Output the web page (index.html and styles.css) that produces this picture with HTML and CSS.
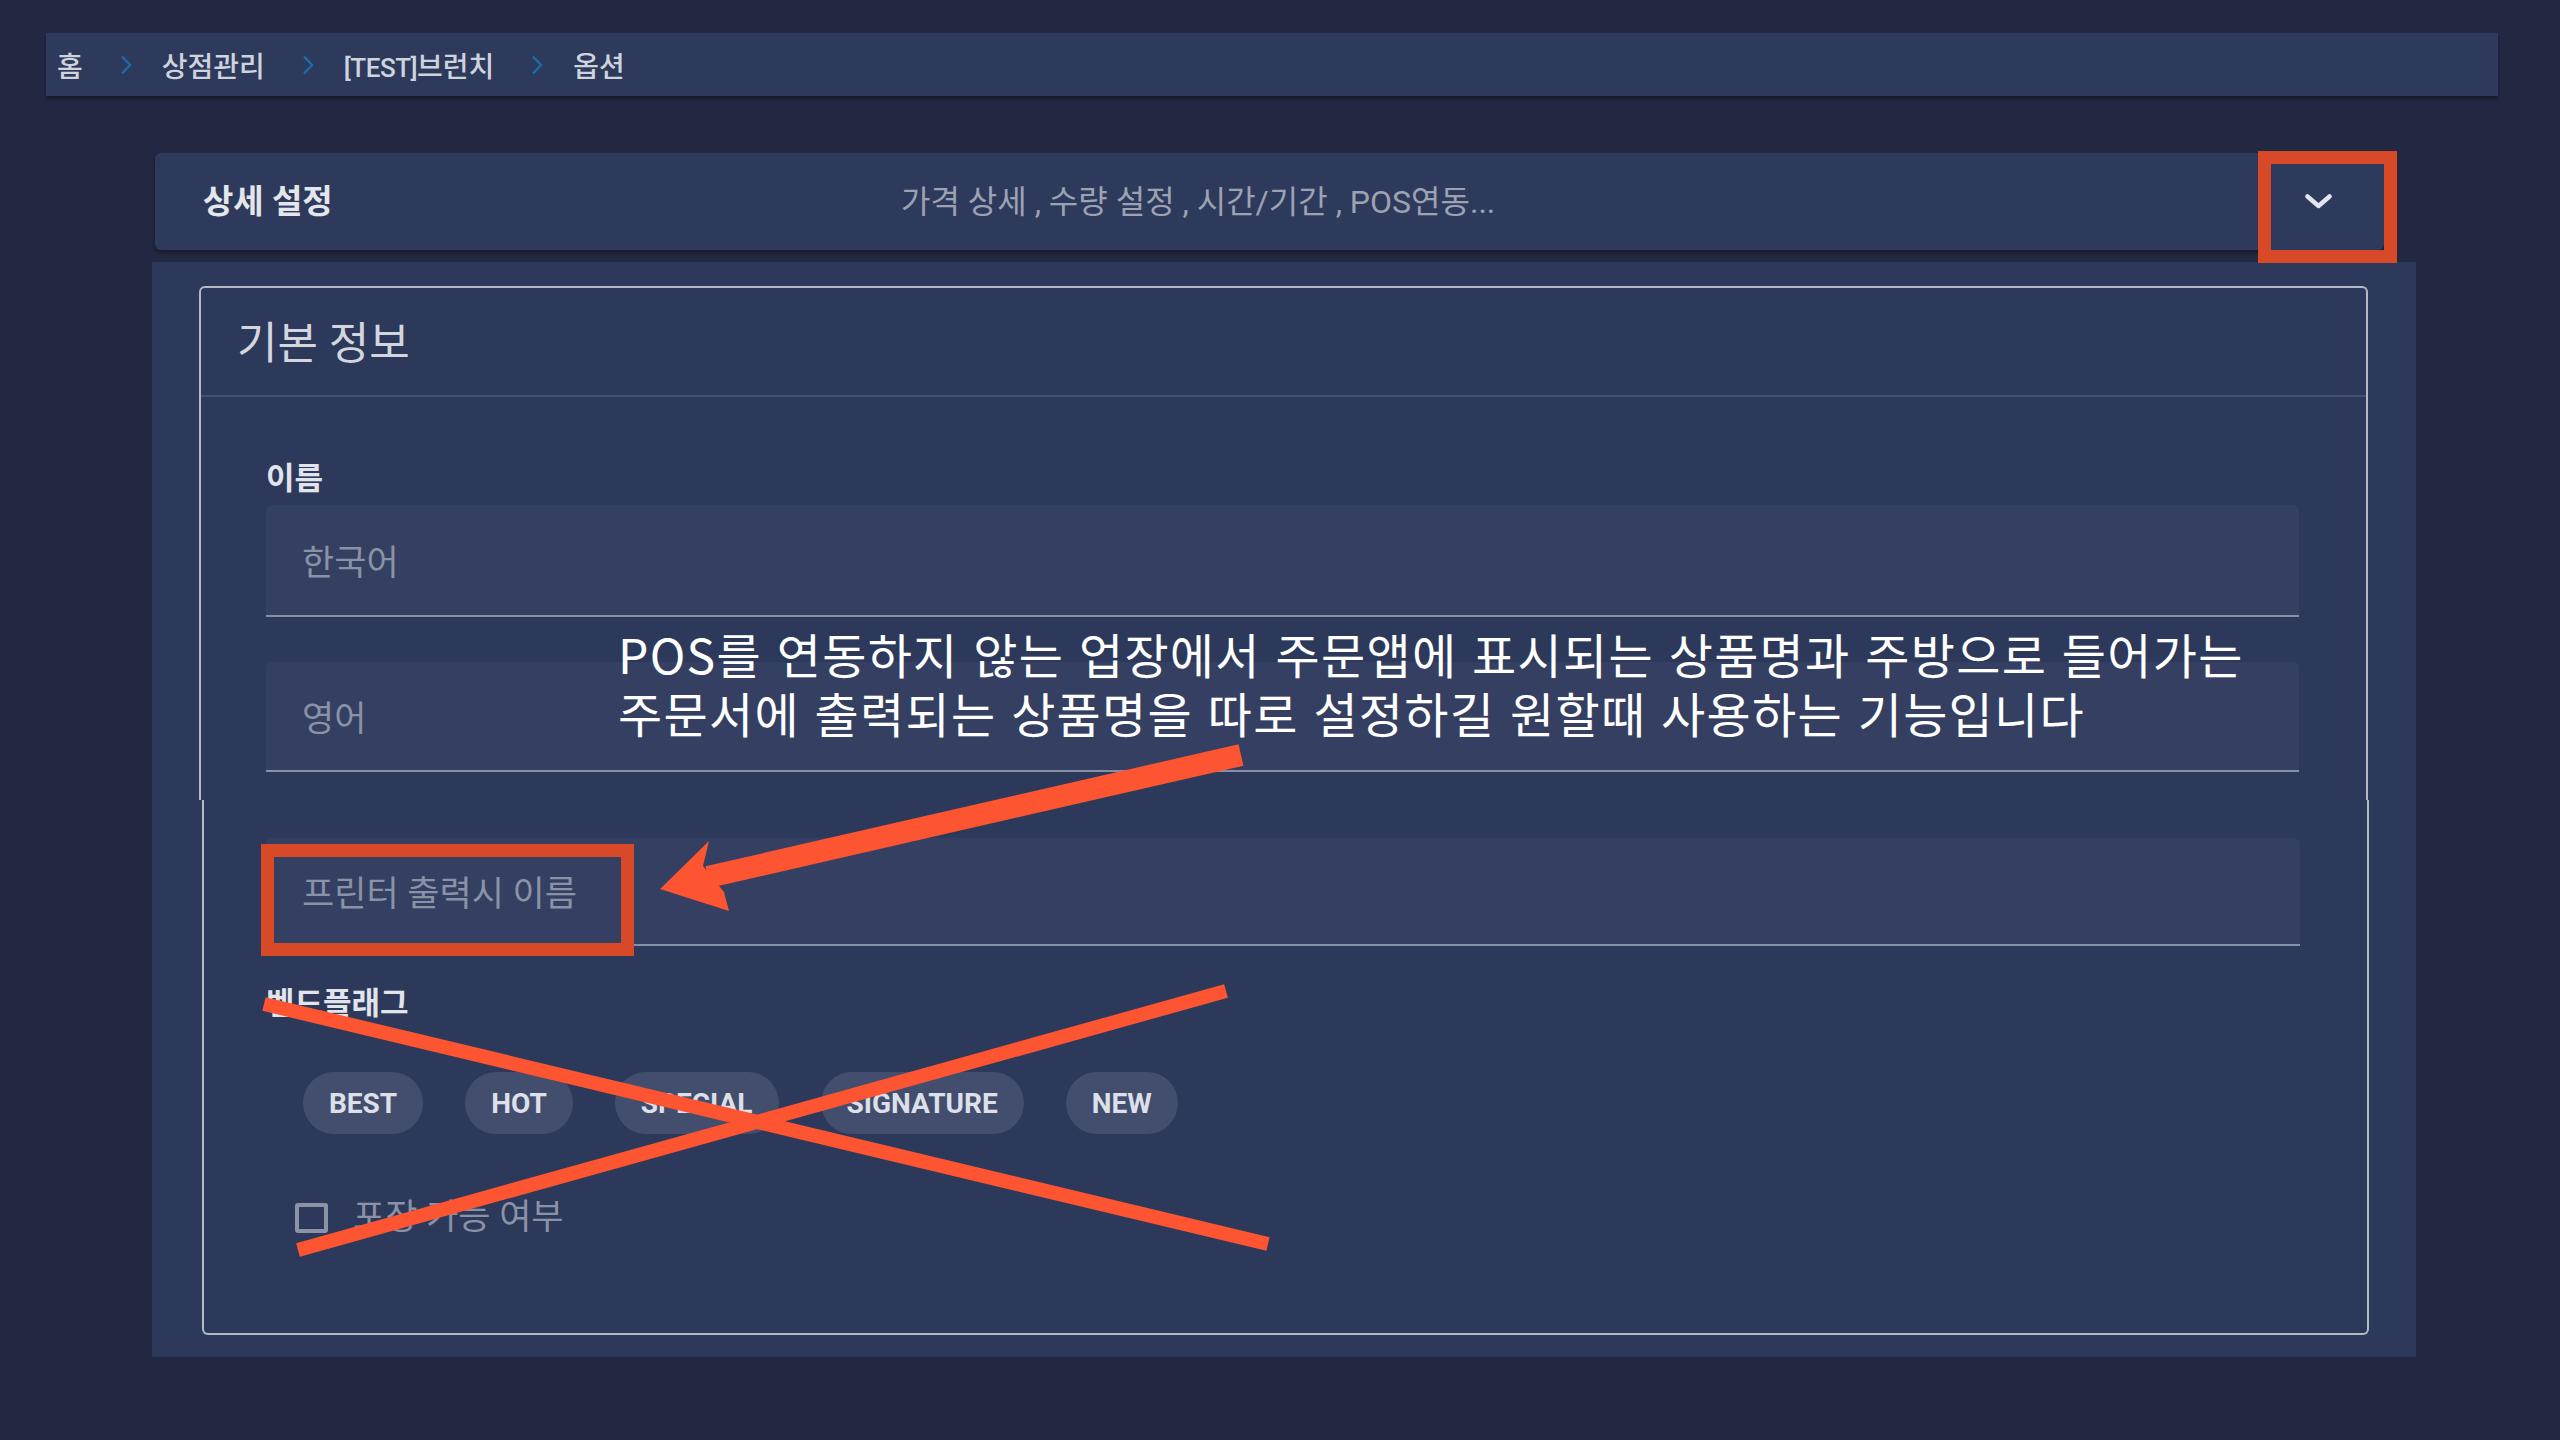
FILE: index.html
```html
<!DOCTYPE html>
<html lang="ko">
<head>
<meta charset="utf-8">
<title>옵션</title>
<link rel="stylesheet" href="styles.css">
</head>
<body>
<div class="page">
  <nav class="crumbs">
    <span class="crumb">홈</span>
    <svg class="sep" viewBox="0 0 12 20"><path d="M2 1.5 L10 10 L2 18.5"/></svg>
    <span class="crumb">상점관리</span>
    <svg class="sep" viewBox="0 0 12 20"><path d="M2 1.5 L10 10 L2 18.5"/></svg>
    <span class="crumb"><span class="latin">[TEST]</span>브런치</span>
    <svg class="sep" viewBox="0 0 12 20"><path d="M2 1.5 L10 10 L2 18.5"/></svg>
    <span class="crumb">옵션</span>
  </nav>

  <section class="expansion">
    <div class="detail-bar">
      <div class="detail-title">상세 설정</div>
      <div class="detail-summary">가격 상세 , 수량 설정 , 시간/기간 , POS연동...</div>
      <div class="detail-toggle">
        <svg viewBox="0 0 27 15"><path d="M2.5 2.5 L13.5 12 L24.5 2.5"/></svg>
      </div>
    </div>

    <div class="panel">
      <div class="card-top">
        <div class="card-title">기본 정보</div>
        <div class="card-body">
          <div class="field-label">이름</div>
          <div class="input first"><span>한국어</span></div>
          <div class="input second"><span>영어</span></div>
        </div>
      </div>
      <div class="card-bottom">
        <div class="input third"><span>프린터 출력시 이름</span></div>
        <div class="field-label flag-label">벤드플래그</div>
        <div class="chips">
          <span class="chip">BEST</span>
          <span class="chip">HOT</span>
          <span class="chip">SPECIAL</span>
          <span class="chip">SIGNATURE</span>
          <span class="chip">NEW</span>
        </div>
        <div class="check">
          <span class="box"></span>
          <span class="check-label">포장 가능 여부</span>
        </div>
      </div>
    </div>
  </section>

  <svg class="overlay" viewBox="0 0 2560 1440">
    <rect class="mark" x="2264.5" y="157.5" width="126" height="99"/>
    <rect class="mark" x="267.5" y="850.5" width="360" height="99"/>
    <line class="shaft" x1="1241" y1="755" x2="708" y2="877"/>
    <polygon class="head" points="660,889 709,841 703,866 724,892 729,911"/>
    <line class="cross" x1="264" y1="1004" x2="1268" y2="1244"/>
    <line class="cross" x1="1226" y1="991" x2="298" y2="1250"/>
  </svg>

  <div class="note">POS를 연동하지 않는 업장에서 주문앱에 표시되는 상품명과 주방으로 들어가는<br>주문서에 출력되는 상품명을 따로 설정하길 원할때 사용하는 기능입니다</div>
</div>
</body>
</html>
```

FILE: styles.css
```css
body {
  margin: 0;
  background: #222841;
  font-family: Roboto, "Noto Sans CJK KR", sans-serif;
}

.page {
  position: relative;
  width: 2560px;
  height: 1440px;
  padding-top: 33px;
  box-sizing: border-box;
  overflow: hidden;
}

/* breadcrumb */
.crumbs {
  margin: 0 62px 0 46px;
  height: 63px;
  background: #2d3a5c;
  box-shadow: 0 3px 3px rgba(0, 0, 0, 0.35);
  display: flex;
  align-items: center;
  padding-left: 11px;
  font-size: 28px;
  font-weight: 500;
  color: #cfd3dd;
}

.crumb .latin {
  font-size: 26px;
  letter-spacing: -0.5px;
}

.sep {
  width: 12px;
  height: 20px;
  margin: 0 30px 0 37px;
  fill: none;
  stroke: #1e6aa8;
  stroke-width: 2.5;
}

/* expansion header */
.expansion {
  margin-top: 57px;
}

.detail-bar {
  margin-left: 155px;
  width: 2229px;
  height: 97px;
  box-sizing: border-box;
  background: #2d3a5c;
  border-radius: 6px;
  box-shadow: 0 3px 4px rgba(0, 0, 0, 0.35);
  display: grid;
  grid-template-columns: 698px 1fr auto;
  align-items: center;
  padding: 0 52px 6px 48px;
}

.detail-title {
  font-size: 33px;
  font-weight: 700;
  color: #e4e6ec;
}

.detail-summary {
  font-size: 32px;
  color: #9da2b2;
}

.detail-toggle {
  padding-top: 6px;
}

.detail-toggle svg {
  display: block;
  width: 27px;
  height: 15px;
  fill: none;
  stroke: #e2e5ec;
  stroke-width: 4.5;
  stroke-linecap: round;
  stroke-linejoin: round;
}

/* panel + card */
.panel {
  margin: 12px 0 0 152px;
  width: 2264px;
  box-sizing: border-box;
  background: #2c395b;
  padding: 24px 48px 22px 47px;
}

.card-top {
  height: 514px;
  box-sizing: border-box;
  border: 2px solid #b4b9c6;
  border-bottom: none;
  border-radius: 6px 6px 0 0;
}

.card-title {
  height: 109px;
  box-sizing: border-box;
  display: flex;
  align-items: center;
  padding-left: 36px;
  padding-bottom: 4px;
  font-size: 44px;
  color: #d3d6de;
  border-bottom: 2px solid #435072;
}

.card-body {
  padding: 64px 67px 0 65px;
}

.field-label {
  font-size: 31px;
  line-height: 36px;
  font-weight: 700;
  color: #e1e4ea;
  margin-bottom: 8px;
}

.input {
  height: 112px;
  box-sizing: border-box;
  background: #343f62;
  border-radius: 6px 6px 0 0;
  border-bottom: 2px solid #8790a6;
  display: flex;
  align-items: center;
  padding-left: 36px;
  padding-bottom: 2px;
  font-size: 35px;
  color: #8a92a6;
}

.input.second {
  margin-top: 45px;
  height: 110px;
}

.input.third {
  height: 108px;
}

.card-bottom {
  margin: 0 -1px 0 3px;
  border: 2px solid #b4b9c6;
  border-top: none;
  border-radius: 0 0 6px 6px;
  padding: 38px 67px 100px 62px;
}

.flag-label {
  margin-top: 40px;
  margin-bottom: 0;
}

.chips {
  margin-top: 50px;
  display: flex;
  gap: 42px;
  padding-left: 37px;
}

.chip {
  height: 62px;
  padding: 0 26px;
  border-radius: 31px;
  background: #434e6e;
  color: #dde0e8;
  font-size: 28px;
  font-weight: 700;
  display: flex;
  align-items: center;
}

.check {
  margin-top: 69px;
  height: 30px;
  display: flex;
  align-items: center;
  padding-left: 29px;
}

.box {
  width: 33px;
  height: 30px;
  box-sizing: border-box;
  border: 4px solid #8c93a7;
  border-radius: 3px;
}

.check-label {
  margin-left: 25px;
  font-size: 35px;
  line-height: 30px;
  color: #8a92a6;
}

/* annotations */
.overlay {
  position: absolute;
  left: 0;
  top: 0;
  width: 2560px;
  height: 1440px;
  pointer-events: none;
}

.mark {
  fill: none;
  stroke: #d84a27;
  stroke-width: 13;
}

.shaft {
  stroke: #fd5431;
  stroke-width: 22;
}

.head {
  fill: #fd5431;
}

.cross {
  stroke: #fd5431;
  stroke-width: 14;
}

.note {
  position: absolute;
  left: 618px;
  top: 624px;
  font-family: "Noto Sans CJK KR", sans-serif;
  font-size: 48px;
  line-height: 59px;
  letter-spacing: 1.3px;
  color: #ffffff;
  white-space: nowrap;
}
```
